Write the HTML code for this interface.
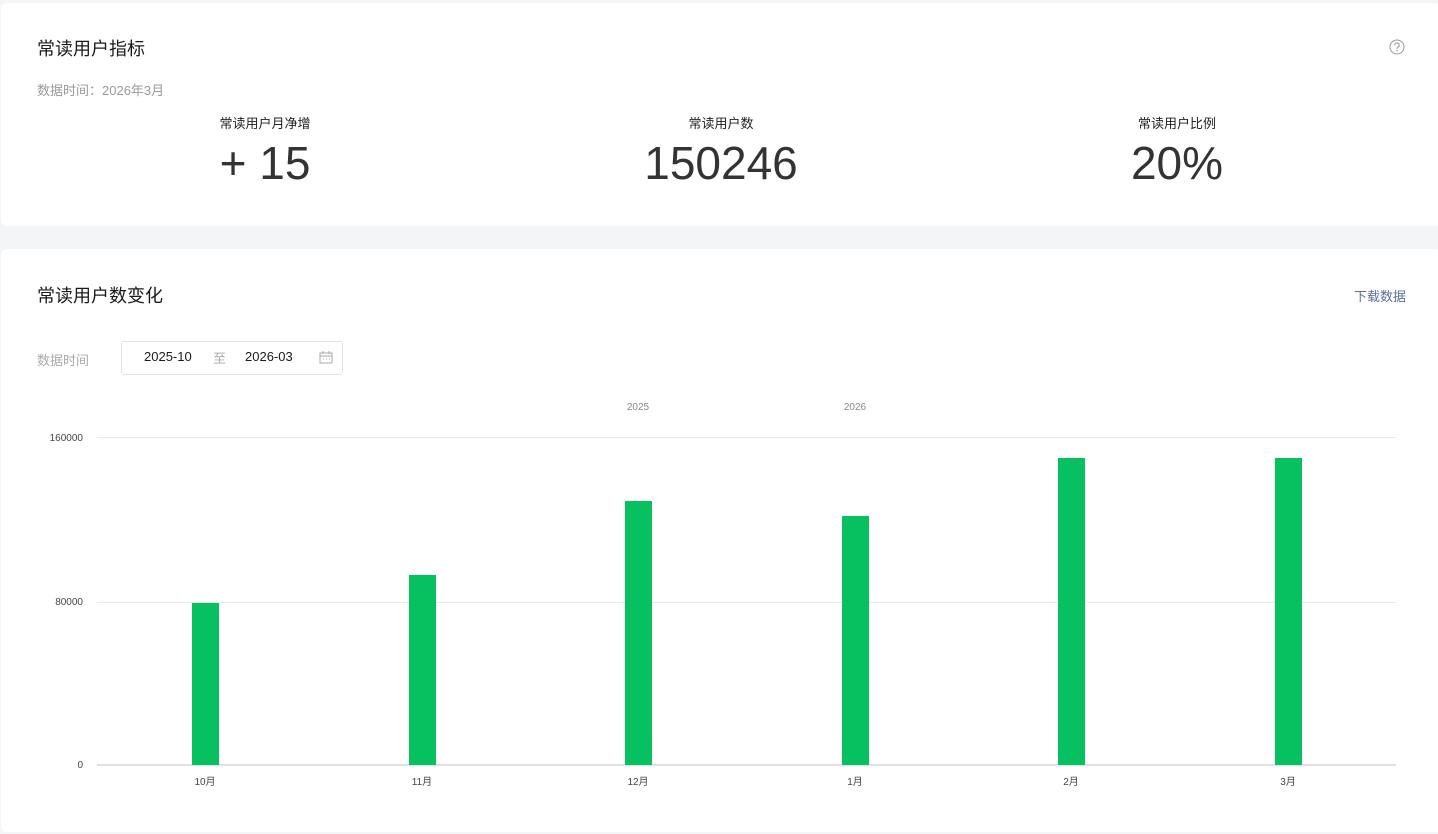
<!DOCTYPE html>
<html><head><meta charset="utf-8"><style>
*{margin:0;padding:0;box-sizing:border-box}
body{width:1438px;height:834px;background:#f4f5f7;font-family:"Liberation Sans","Noto Sans CJK SC",sans-serif;position:relative;overflow:hidden;color:#1f1f1f}
.card{position:absolute;background:#fff;border-radius:6px;left:1px;width:1440px}
.abs{position:absolute;white-space:nowrap}
.c{transform:translateX(-50%)}
.bar{position:absolute;background:#07c160;width:27px}
.gl{position:absolute;left:97px;width:1299px;height:1px;background:#e8e9ec}
.ax{font-size:10px;color:#444}
.big{font-size:46px;color:#333}
</style></head><body>
<div class="card" style="top:3px;height:223px"></div>
<div class="card" style="top:249px;height:583px"></div>

<div class="abs" style="left:37px;top:35px;font-size:18px;color:#1a1a1a">常读用户指标</div>
<div class="abs" style="left:37px;top:80px;font-size:13px;color:#999">数据时间：2026年3月</div>
<svg class="abs" style="left:1389px;top:39px" width="16" height="16" viewBox="0 0 16 16"><circle cx="8" cy="8" r="7" fill="none" stroke="#999" stroke-width="1"/><path d="M5.8 6.2a2.2 2.2 0 1 1 3 2c-.6.3-.8.7-.8 1.3v.5" fill="none" stroke="#999" stroke-width="1"/><circle cx="8" cy="11.8" r=".7" fill="#999"/></svg>

<div class="abs c" style="left:265px;top:113px;font-size:13px">常读用户月净增</div>
<div class="abs c big" style="left:265px;top:136px">+ 15</div>
<div class="abs c" style="left:721px;top:113px;font-size:13px">常读用户数</div>
<div class="abs c big" style="left:721px;top:136px">150246</div>
<div class="abs c" style="left:1177px;top:113px;font-size:13px">常读用户比例</div>
<div class="abs c big" style="left:1177px;top:136px">20%</div>

<div class="abs" style="left:37px;top:282px;font-size:18px;color:#1a1a1a">常读用户数变化</div>
<div class="abs" style="left:1354px;top:286px;font-size:13px;color:#5a6fa0">下载数据</div>
<div class="abs" style="left:37px;top:350px;font-size:13px;color:#aaa">数据时间</div>
<div class="abs" style="left:121px;top:341px;width:222px;height:34px;border:1px solid #e3e4e7;border-radius:3px"></div>
<div class="abs" style="left:144px;top:349px;font-size:13px;color:#1a1a1a">2025-10</div>
<div class="abs" style="left:213px;top:348px;font-size:13px;color:#aaa">至</div>
<div class="abs" style="left:245px;top:349px;font-size:13px;color:#1a1a1a">2026-03</div>
<svg class="abs" style="left:319px;top:351px" width="14" height="13" viewBox="0 0 14 13"><rect x="1" y="2" width="12" height="10" fill="none" stroke="#aaa"/><path d="M1 5h12M4 0v3M10 0v3M4 8h1M7 8h1M10 8h1" stroke="#aaa"/></svg>

<div class="abs c ax" style="left:638px;top:402px;color:#888">2025</div>
<div class="abs c ax" style="left:855px;top:402px;color:#888">2026</div>

<div class="gl" style="top:437px"></div>
<div class="gl" style="top:602px"></div>
<div class="gl" style="top:764px;height:2px;background:#dde1e8"></div>
<div class="abs ax" style="right:1355px;top:433px">160000</div>
<div class="abs ax" style="right:1355px;top:597px">80000</div>
<div class="abs ax" style="right:1355px;top:760px">0</div>

<div class="bar" style="left:192px;top:603px;height:162px"></div>
<div class="bar" style="left:409px;top:575px;height:190px"></div>
<div class="bar" style="left:625px;top:501px;height:264px"></div>
<div class="bar" style="left:842px;top:516px;height:249px"></div>
<div class="bar" style="left:1058px;top:458px;height:307px"></div>
<div class="bar" style="left:1275px;top:458px;height:307px"></div>

<div class="abs c ax" style="left:205px;top:773px">10月</div>
<div class="abs c ax" style="left:422px;top:773px">11月</div>
<div class="abs c ax" style="left:638px;top:773px">12月</div>
<div class="abs c ax" style="left:855px;top:773px">1月</div>
<div class="abs c ax" style="left:1071px;top:773px">2月</div>
<div class="abs c ax" style="left:1288px;top:773px">3月</div>
</body></html>
